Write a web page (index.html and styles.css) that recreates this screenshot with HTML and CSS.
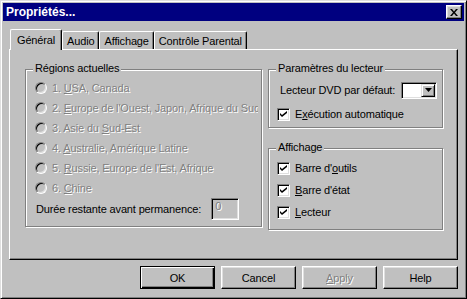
FILE: index.html
```html
<!DOCTYPE html>
<html lang="fr">
<head>
  <meta charset="UTF-8" />
  <title>Propriétés...</title>
  <link rel="stylesheet" href="styles.css">
</head>
<body>
  <div class="window">
    <div class="titlebar">
      <span class="title">Propriétés...</span>
      <span class="close-btn">
        <svg width="8" height="7" viewBox="0 0 8 7"><path d="M0 0h2l2 2.5L6 0h2L5 3.5 8 7H6L4 4.5 2 7H0l3-3.5z"/></svg>
      </span>
    </div>

    <div class="content">
      <div class="tabs">
        <div class="tab active">Général</div>
        <div class="tab">Audio</div>
        <div class="tab">Affichage</div>
        <div class="tab">Contrôle Parental</div>
      </div>

      <div class="panel">
        <div class="group regions">
          <span class="legend">Régions actuelles</span>
          <div class="radio-row"><span class="radio"></span><span class="disabled">1. <u>U</u>SA, Canada</span></div>
          <div class="radio-row"><span class="radio"></span><span class="disabled">2. <u>E</u>urope de l'Ouest, Japon, Afrique du Sud</span></div>
          <div class="radio-row"><span class="radio"></span><span class="disabled">3. Asie du <u>S</u>ud-Est</span></div>
          <div class="radio-row"><span class="radio"></span><span class="disabled">4. <u>A</u>ustralie, Amérique Latine</span></div>
          <div class="radio-row"><span class="radio"></span><span class="disabled">5. <u>R</u>ussie, Europe de l'Est, Afrique</span></div>
          <div class="radio-row"><span class="radio"></span><span class="disabled">6. <u>C</u>hine</span></div>
          <div class="field-row">
            <span>Durée restante avant permanence:</span>
            <span class="field disabled">0</span>
          </div>
        </div>

        <div class="right-col">
          <div class="group player">
            <span class="legend">Paramètres du lecteur</span>
            <div class="combo-row">
              <span>Lecteur DVD par défaut:</span>
              <span class="combo">
                <span class="drop">
                  <svg width="7" height="4" viewBox="0 0 7 4"><path d="M0 0h7L3.5 4z"/></svg>
                </span>
              </span>
            </div>
            <div class="check-row">
              <span class="check"><svg width="7" height="7" viewBox="0 0 7 7"><path d="M0 2l2 2 5-4v2L2 6 0 4z"/></svg></span>
              <span>E<u>x</u>écution automatique</span>
            </div>
          </div>

          <div class="group display">
            <span class="legend">Affichage</span>
            <div class="check-row">
              <span class="check"><svg width="7" height="7" viewBox="0 0 7 7"><path d="M0 2l2 2 5-4v2L2 6 0 4z"/></svg></span>
              <span>Barre d'<u>o</u>utils</span>
            </div>
            <div class="check-row">
              <span class="check"><svg width="7" height="7" viewBox="0 0 7 7"><path d="M0 2l2 2 5-4v2L2 6 0 4z"/></svg></span>
              <span><u>B</u>arre d'état</span>
            </div>
            <div class="check-row">
              <span class="check"><svg width="7" height="7" viewBox="0 0 7 7"><path d="M0 2l2 2 5-4v2L2 6 0 4z"/></svg></span>
              <span><u>L</u>ecteur</span>
            </div>
          </div>
        </div>
      </div>

      <div class="buttons">
        <span class="btn default">OK</span>
        <span class="btn">Cancel</span>
        <span class="btn"><span class="disabled"><u>A</u>pply</span></span>
        <span class="btn">Help</span>
      </div>
    </div>
  </div>
</body>
</html>
```

FILE: styles.css
```css
* {
  box-sizing: border-box;
}
body {
  margin: 0;
  background: #c0c0c0;
  font-family: "Liberation Sans", Arial, sans-serif;
  font-size: 11px;
  letter-spacing: -0.15px;
  color: #000;
}
.window {
  width: 467px;
  height: 299px;
  padding: 2px;
  border: 1px solid;
  border-color: #dfdfdf #000 #000 #dfdfdf;
  box-shadow: inset 1px 1px #fff, inset -1px -1px #808080;
  display: flex;
  flex-direction: column;
}
.titlebar {
  height: 18px;
  background: #000080;
  color: #fff;
  padding: 0 2px 0 3px;
  display: flex;
  align-items: center;
  justify-content: space-between;
}
.title {
  font-size: 12px;
  font-weight: bold;
  letter-spacing: 0;
}
.close-btn {
  width: 16px;
  height: 14px;
  background: #c0c0c0;
  border: 1px solid;
  border-color: #fff #000 #000 #fff;
  box-shadow: inset -1px -1px #808080, inset 1px 1px #dfdfdf;
  display: flex;
  align-items: center;
  justify-content: center;
}
.close-btn svg {
  fill: #000;
}

/* onglets + panneau */
.content {
  flex: 1;
  padding: 8px 6px 0 6px;
  display: flex;
  flex-direction: column;
}
.tabs {
  height: 20px;
  padding-left: 1px;
  display: flex;
  align-items: flex-end;
  position: relative;
  z-index: 1;
}
.tab {
  height: 18px;
  padding: 1px 4px 0 4px;
  border: 1px solid;
  border-bottom: none;
  border-color: #fff #000 #000 #fff;
  border-radius: 2px 2px 0 0;
  box-shadow: inset -1px 0 #808080;
  background: #c0c0c0;
  display: flex;
  align-items: center;
}
.tab.active {
  height: 21px;
  margin-bottom: -1px;
  padding: 0 6px;
}
.panel {
  height: 211px;
  border: 1px solid;
  border-color: #fff #000 #000 #fff;
  box-shadow: inset -1px -1px #808080;
  padding: 19px 0 0 15px;
  display: flex;
  gap: 6px;
}

/* cadres de groupe */
.group {
  position: relative;
  border: 1px solid #808080;
  box-shadow: inset 1px 1px #fff, 1px 1px #fff;
}
.legend {
  position: absolute;
  top: -8px;
  left: 7px;
  padding: 0 2px;
  line-height: 13px;
  background: #c0c0c0;
  white-space: nowrap;
}
.disabled {
  color: #808080;
  text-shadow: 1px 1px 0 #fff;
}
.regions {
  width: 237px;
  height: 158px;
  padding: 8px 3px 0 9px;
}
.radio-row {
  height: 20px;
  display: flex;
  align-items: center;
  gap: 5px;
  white-space: nowrap;
  overflow: hidden;
}
.radio {
  flex: none;
  width: 12px;
  height: 12px;
  border-radius: 50%;
  border: 1px solid;
  border-color: #808080 #fff #fff #808080;
  box-shadow: inset 1px 1px #000, inset -1px -1px #dfdfdf;
  background: #c0c0c0;
}
.field-row {
  height: 22px;
  margin-left: 1px;
  display: flex;
  align-items: center;
  gap: 10px;
  white-space: nowrap;
}
.field {
  width: 28px;
  height: 22px;
  padding: 1px 3px;
  line-height: 13px;
  border: 1px solid;
  border-color: #808080 #fff #fff #808080;
  box-shadow: inset 1px 1px #000, inset -1px -1px #dfdfdf;
  background: #c0c0c0;
}

.right-col {
  width: 175px;
  display: flex;
  flex-direction: column;
  gap: 20px;
}
.player {
  height: 59px;
  padding: 12px 0 0 8px;
}
.display {
  height: 82px;
  padding: 11px 0 0 8px;
  display: flex;
  flex-direction: column;
  gap: 6px;
}
.combo-row {
  height: 16px;
  margin-left: 3px;
  display: flex;
  align-items: center;
  gap: 6px;
  white-space: nowrap;
}
.combo {
  width: 36px;
  height: 17px;
  padding: 1px;
  border: 1px solid;
  border-color: #808080 #fff #fff #808080;
  box-shadow: inset 1px 1px #000, inset -1px -1px #dfdfdf;
  background: #fff;
  display: flex;
  justify-content: flex-end;
}
.drop {
  width: 14px;
  height: 100%;
  background: #c0c0c0;
  border: 1px solid;
  border-color: #dfdfdf #000 #000 #dfdfdf;
  box-shadow: inset 1px 1px #fff, inset -1px -1px #808080;
  display: flex;
  align-items: center;
  justify-content: center;
}
.check-row {
  height: 16px;
  display: flex;
  align-items: center;
  gap: 5px;
  white-space: nowrap;
}
.player .check-row {
  margin-top: 8px;
}
.check {
  flex: none;
  width: 13px;
  height: 13px;
  border: 1px solid;
  border-color: #808080 #fff #fff #808080;
  box-shadow: inset 1px 1px #000, inset -1px -1px #dfdfdf;
  background: #fff;
  display: flex;
  align-items: center;
  justify-content: center;
}

/* boutons du bas */
.buttons {
  margin-top: 6px;
  display: flex;
  justify-content: flex-end;
  gap: 6px;
}
.btn {
  width: 75px;
  height: 23px;
  border: 1px solid;
  border-color: #fff #000 #000 #fff;
  box-shadow: inset -1px -1px #808080, inset 1px 1px #dfdfdf;
  display: flex;
  align-items: center;
  justify-content: center;
}
.btn.default {
  border-color: #000;
  box-shadow: inset 1px 1px #fff, inset -1px -1px #000, inset -2px -2px #808080;
}
```
